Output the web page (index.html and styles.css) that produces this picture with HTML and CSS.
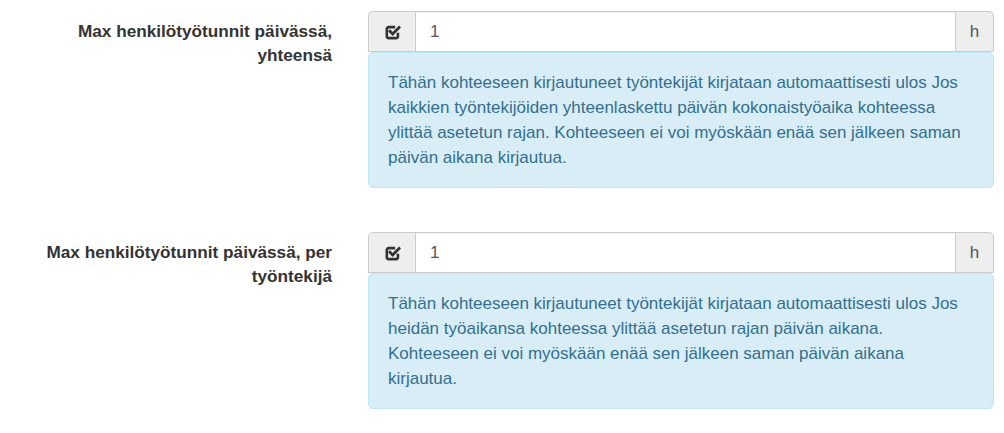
FILE: index.html
```html
<!DOCTYPE html>
<html lang="fi">
<head>
<meta charset="utf-8">
<link rel="stylesheet" href="styles.css">
</head>
<body>
<form class="form">
  <div class="form-group">
    <label class="control-label">Max henkilötyötunnit päivässä, yhteensä</label>
    <div class="control">
      <div class="input-group">
        <span class="addon addon-left">
          <svg class="icon" viewBox="0 0 14 14" width="16" height="16" aria-hidden="true">
            <path d="M11.3 7.6v3.3a1.5 1.5 0 0 1-1.5 1.5H3.1a1.5 1.5 0 0 1-1.5-1.5V4.2a1.5 1.5 0 0 1 1.5-1.5h5.8" fill="none" stroke="#333" stroke-width="2.3" stroke-linejoin="round"/>
            <path d="M4.4 6.4l2.3 2.3 5.6-5.6" fill="none" stroke="#333" stroke-width="2.5" stroke-linecap="square"/>
          </svg>
        </span>
        <input class="input" type="text" value="1">
        <span class="addon addon-right">h</span>
      </div>
      <div class="alert">Tähän kohteeseen kirjautuneet työntekijät kirjataan automaattisesti ulos Jos kaikkien työntekijöiden yhteenlaskettu päivän kokonaistyöaika kohteessa ylittää asetetun rajan. Kohteeseen ei voi myöskään enää sen jälkeen saman päivän aikana kirjautua.</div>
    </div>
  </div>
  <div class="form-group">
    <label class="control-label">Max henkilötyötunnit päivässä, per työntekijä</label>
    <div class="control">
      <div class="input-group">
        <span class="addon addon-left">
          <svg class="icon" viewBox="0 0 14 14" width="16" height="16" aria-hidden="true">
            <path d="M11.3 7.6v3.3a1.5 1.5 0 0 1-1.5 1.5H3.1a1.5 1.5 0 0 1-1.5-1.5V4.2a1.5 1.5 0 0 1 1.5-1.5h5.8" fill="none" stroke="#333" stroke-width="2.3" stroke-linejoin="round"/>
            <path d="M4.4 6.4l2.3 2.3 5.6-5.6" fill="none" stroke="#333" stroke-width="2.5" stroke-linecap="square"/>
          </svg>
        </span>
        <input class="input" type="text" value="1">
        <span class="addon addon-right">h</span>
      </div>
      <div class="alert">Tähän kohteeseen kirjautuneet työntekijät kirjataan automaattisesti ulos Jos heidän työaikansa kohteessa ylittää asetetun rajan päivän aikana. Kohteeseen ei voi myöskään enää sen jälkeen saman päivän aikana kirjautua.</div>
    </div>
  </div>
</form>
</body>
</html>
```

FILE: styles.css
```css
* { box-sizing: border-box; }
html, body { margin: 0; background: #fff; }
body {
  font-family: "Liberation Sans", Arial, sans-serif;
  font-size: 17px;
  line-height: 24px;
  color: #333;
  padding: 11px 10px 0 18px;
}
.form { display: flex; flex-direction: column; gap: 44px; }
.form-group {
  display: grid;
  grid-template-columns: 314px 1fr;
  column-gap: 36px;
}
.control-label {
  font-weight: bold;
  font-size: 17.2px;
  text-align: right;
  padding-top: 8px;
  line-height: 24px;
}
.control { display: flex; flex-direction: column; }
.input-group {
  display: flex;
  height: 41px;
}
.addon {
  display: flex;
  align-items: center;
  justify-content: center;
  background: #eee;
  border: 1px solid #ccc;
  color: #555;
  font-size: 17px;
}
.addon-left {
  width: 47px;
  border-right: 0;
  border-radius: 5px 0 0 0;
}
.addon-left .icon { display: block; margin-left: 1px; }
.addon-right {
  width: 39px;
  border-left: 1px solid #ccc;
  border-radius: 0 5px 0 0;
}
.input {
  flex: 1;
  min-width: 0;
  border: 1px solid #ccc;
  border-right: 0;
  padding: 0 14px;
  font-family: "Liberation Sans", Arial, sans-serif;
  font-size: 17px;
  color: #555;
  background: #fff;
  outline: none;
  box-shadow: inset 0 1px 1px rgba(0,0,0,.075);
}
.alert {
  background: #d9edf7;
  border: 1px solid #bce8f1;
  color: #31708f;
  border-radius: 5px;
  padding: 17px 18px 17px 19px;
  line-height: 25px;
}
```
